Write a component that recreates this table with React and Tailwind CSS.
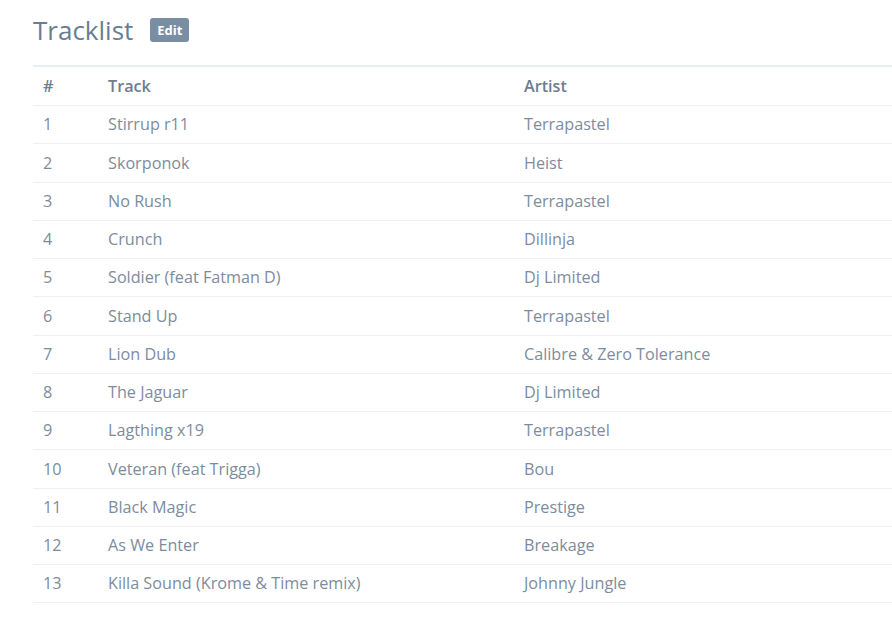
import React from "react";

const tracks = [
  ["1", "Stirrup r11", "Terrapastel"],
  ["2", "Skorponok", "Heist"],
  ["3", "No Rush", "Terrapastel"],
  ["4", "Crunch", "Dillinja"],
  ["5", "Soldier (feat Fatman D)", "Dj Limited"],
  ["6", "Stand Up", "Terrapastel"],
  ["7", "Lion Dub", "Calibre & Zero Tolerance"],
  ["8", "The Jaguar", "Dj Limited"],
  ["9", "Lagthing x19", "Terrapastel"],
  ["10", "Veteran (feat Trigga)", "Bou"],
  ["11", "Black Magic", "Prestige"],
  ["12", "As We Enter", "Breakage"],
  ["13", "Killa Sound (Krome & Time remix)", "Johnny Jungle"],
];

export default function App() {
  return (
    <div
      className="bg-white w-[892px] h-[627px] overflow-hidden pl-[33px] pt-[12px]"
      style={{ fontFamily: '"Open Sans", sans-serif' }}
    >
      <div className="flex items-center h-[36px]">
        <h2 className="text-[26px] leading-none text-[#687d92] font-normal">Tracklist</h2>
        <span className="ml-[17px] bg-[#7a8ea3] text-white text-[13px] font-bold rounded-[3px] px-[7px] h-[24px] flex items-center leading-none">
          Edit
        </span>
      </div>
      <div className="mt-[17px] border-t-2 border-[#e8eef2] w-[859px]">
        <div className="flex h-[39px] items-center border-b border-[#eef1f4] text-[16.2px] font-semibold text-[#6b7e92]">
          <div className="w-[75px] pl-[10px]">#</div>
          <div className="w-[416px]">Track</div>
          <div className="flex-1">Artist</div>
        </div>
        {tracks.map(([n, t, a]) => (
          <div
            key={n}
            className="flex h-[38.25px] items-center border-b border-[#eef1f4] text-[16.2px] text-[#7d8c9d]"
          >
            <div className="w-[75px] pl-[10px]">{n}</div>
            <div className="w-[416px]">{t}</div>
            <div className="flex-1">{a}</div>
          </div>
        ))}
      </div>
    </div>
  );
}
